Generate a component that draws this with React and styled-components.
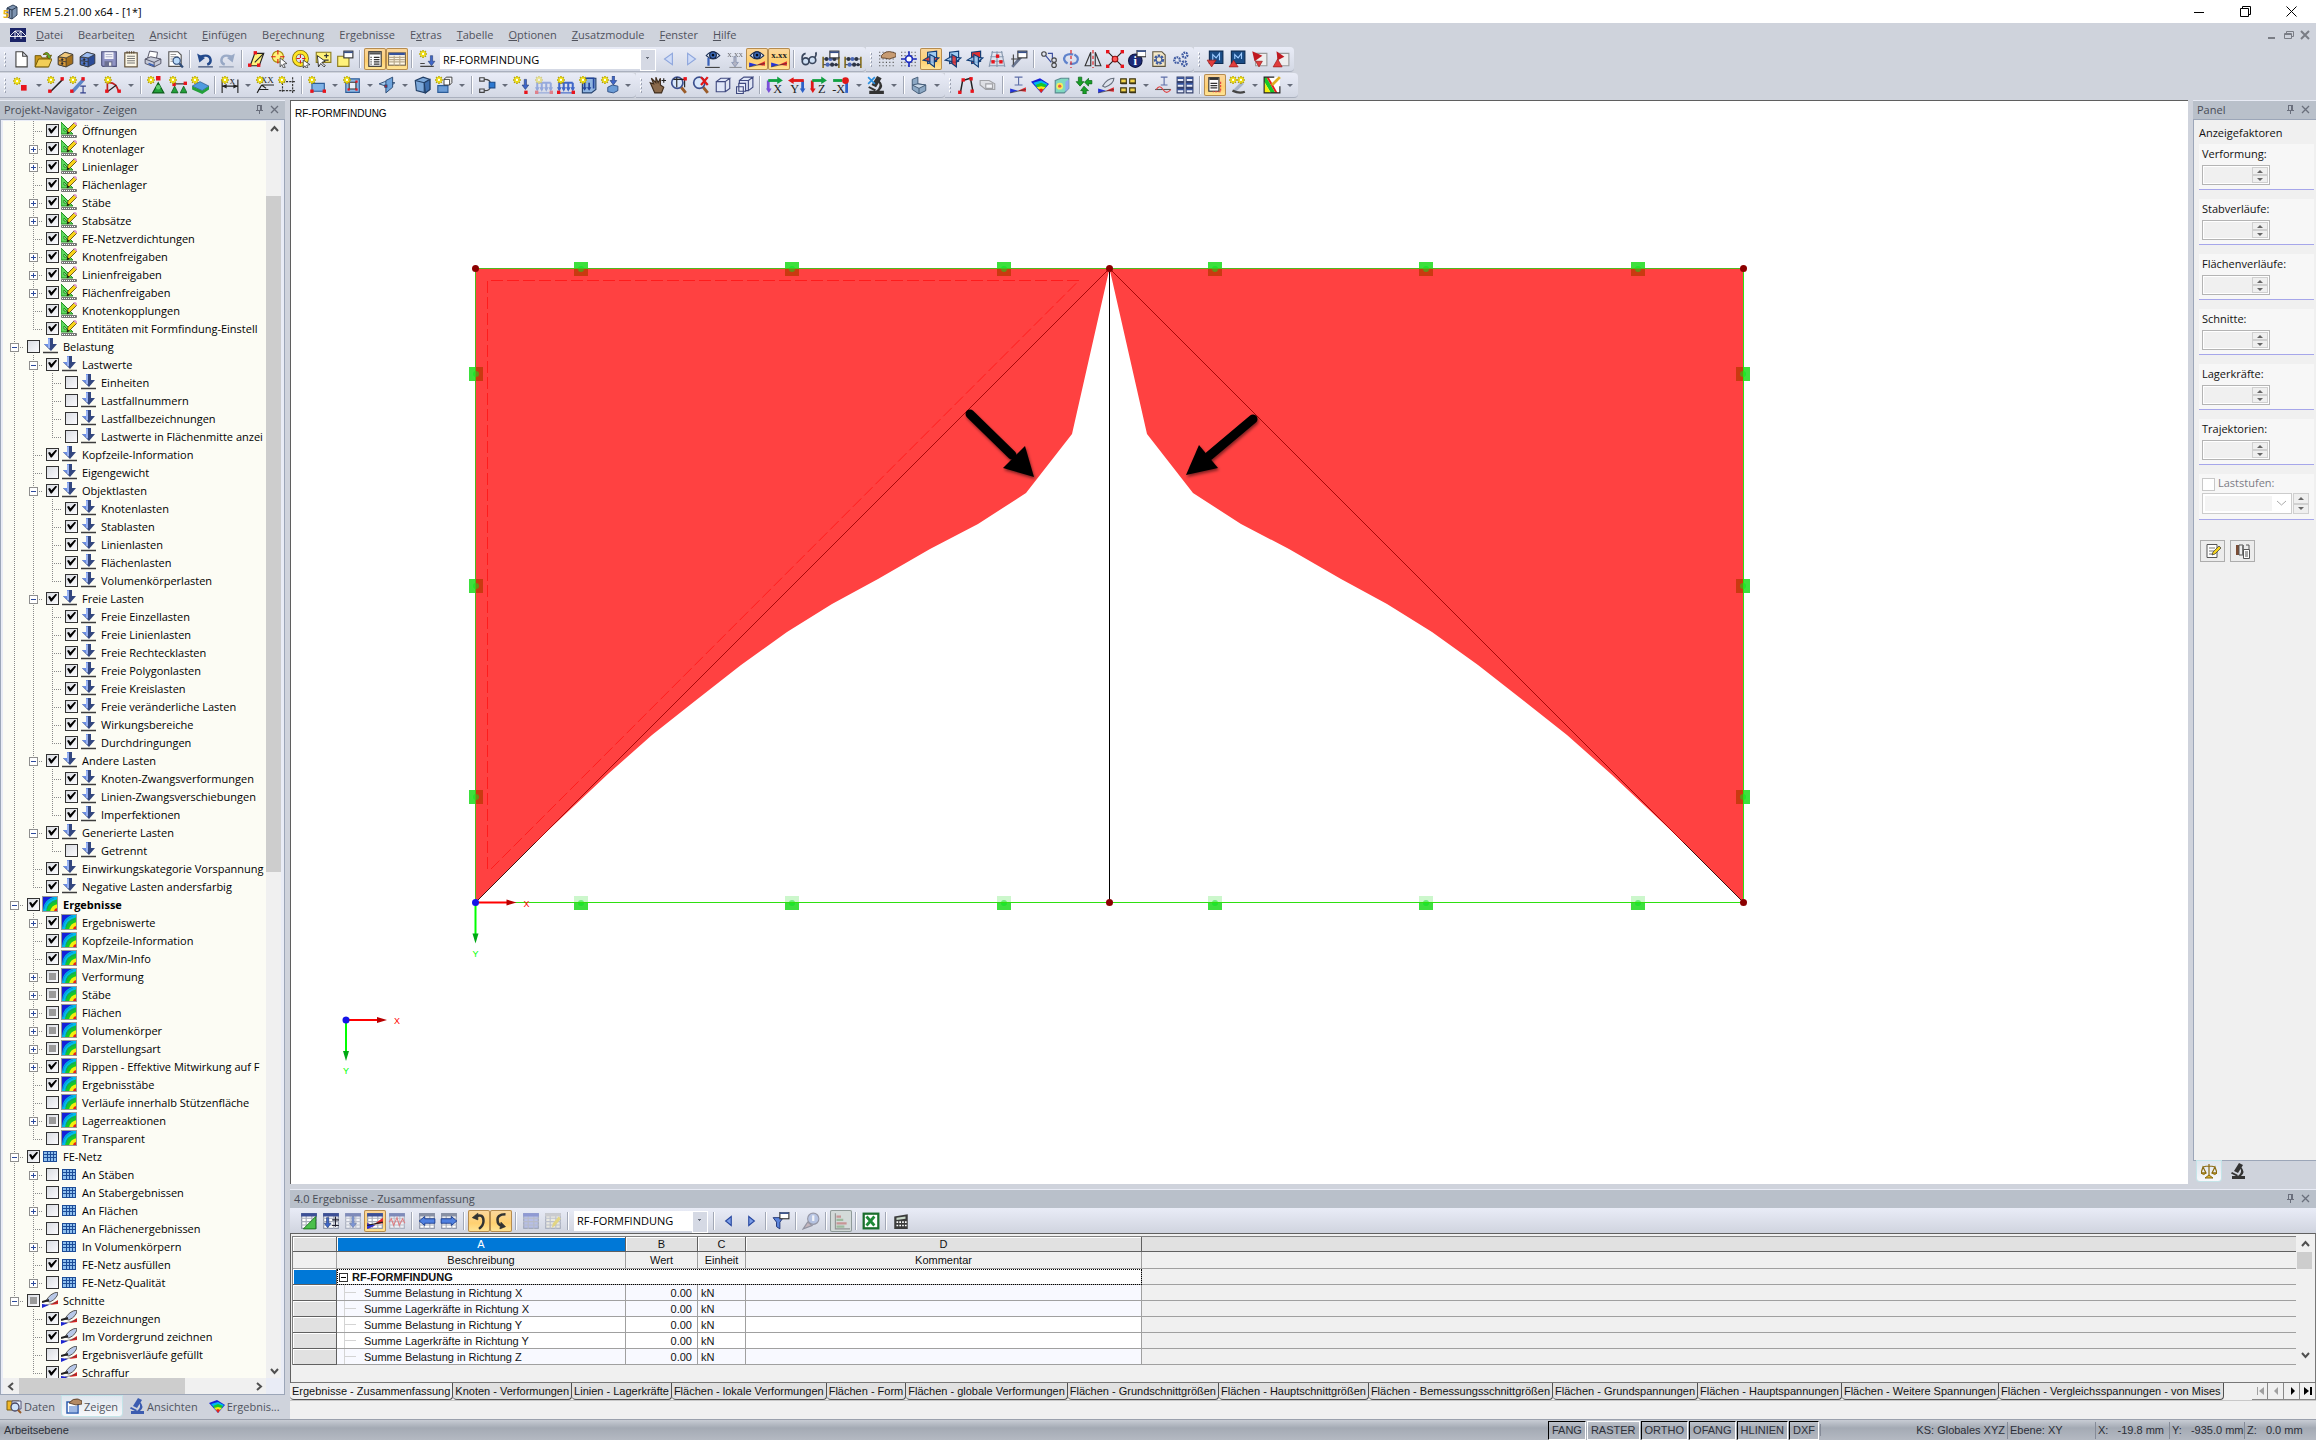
import React from "react";
import styled, { createGlobalStyle, css } from "styled-components";

const ui = `"Open Sans", "Noto Sans", sans-serif`;
const arial = `"Liberation Sans", Arial, sans-serif`;

const GlobalStyle = createGlobalStyle`
  * {
    box-sizing: border-box;
  }

  body {
    margin: 0;
    background: #cfd3dc;
    font-family: ${ui};
    font-size: 11px;
    color: #111;
    overflow: hidden;
  }

  button,
  input,
  select {
    font: inherit;
    color: inherit;
    margin: 0;
    padding: 0;
    border: 0;
    border-radius: 0;
    background: none;
  }

  svg {
    display: block;
  }
`;

/* ---------- icons ---------- */

const Star = ({ x = 0, y = 0 }) => (
  <g transform={`translate(${x} ${y})`}>
    <path d="M3.500 0v7M0 3.500h7M1 1l5 5M6 1L1 6" stroke="#a89600" strokeWidth="1.400" />
    <path d="M3.500 .5v6M.5 3.500h6M1.500 1.500l4 4M5.500 1.500l-4 4" stroke="#ffee10" strokeWidth="1" />
    <circle cx="3.500" cy="3.500" r="1" fill="#fff" />
  </g>
);

const Red = ({ x, y, s = 3 }) => (
  <rect x={x} y={y} width={s} height={s} fill="#e8141c" />
);

const Letter = ({ x = 8, y = 15, size = 11, fill = "#222", children }) => (
  <text
    x={x}
    y={y}
    fontSize={size}
    fill={fill}
    textAnchor="middle"
    fontFamily="Liberation Serif, serif"
  >
    {children}
  </text>
);

const Down = ({ x, y, h = 9, fill = "#3f66c8" }) => (
  <path
    d={`M${x - 1} ${y}h2v${h - 4}h2l-3 4-3-4h2z`}
    fill={fill}
    stroke="#20386f"
    strokeWidth=".5"
  />
);

const Dots = ({ fill = "#555" }) => (
  <path
    d="M1 2h15M1 5h15M1 8h15M1 11h15M1 14h15"
    stroke={fill}
    strokeWidth="1"
    strokeDasharray="1 2"
  />
);

const Box = ({ a, b, c }) => (
  <g stroke="#333" strokeWidth=".7">
    <path d="M2 6l6-4 7 2v8l-6 3-7-2z" fill={a} />
    <path d="M2 6l7 1v8l-7-2z" fill={b} />
    <path d="M2 6l6-4 7 2-6 3z" fill={c} />
    <path d="M2.500 9.500l6.500 1" fill="none" />
    <circle cx="5.500" cy="8.500" r=".8" fill="#222" />
    <circle cx="5.500" cy="12" r=".8" fill="#222" />
  </g>
);

const Eye = ({ x = 0, y = 0 }) => (
  <g transform={`translate(${x} ${y})`}>
    <path d="M1 5q6-7 12 0-6 6-12 0z" fill="#dfe8f6" stroke="#1c2f55" />
    <circle cx="7" cy="4.500" r="3" fill="#3c6ab8" stroke="#132244" />
    <circle cx="7" cy="4.500" r="1.200" fill="#050b18" />
  </g>
);

const Wedge = () => (
  <g>
    <path d="M1 15L1 11 8 13z" fill="#2434d8" />
    <path d="M15 10v4L8 13z" fill="#e0252a" />
    <path d="M1 15l14-3" stroke="#333" strokeWidth=".6" />
  </g>
);

const Planes = ({ a, b, c }) => (
  <g stroke="#0f3a74" strokeWidth="1">
    <path d="M5 2l8-1v9l-8 2z" fill={a} />
    <path d="M1 9l5-3 9 1-5 4z" fill={b} fillOpacity=".85" />
    <path d="M7 4l4 2v9l-4-3z" fill={c} fillOpacity=".85" />
  </g>
);

const Abacus = () => (
  <g fill="#2c3446">
    <path d="M1 6v10M15 6v10" stroke="#8a7322" strokeWidth="1.500" />
    <path d="M1 8h14M1 13h14" stroke="#555" />
    <circle cx="4" cy="8" r="1.800" />
    <circle cx="7.500" cy="8" r="1.800" fill="#4a68b8" />
    <circle cx="11" cy="8" r="1.800" />
    <circle cx="5" cy="13" r="1.800" fill="#4a68b8" />
    <circle cx="9" cy="13" r="1.800" />
    <circle cx="12.500" cy="13" r="1.500" />
  </g>
);

const Window = ({ x = 7, y = 1, fill = "#fff" }) => (
  <g>
    <rect x={x} y={y} width="8" height="6" fill={fill} stroke="#333" />
    <path d={`M${x} ${y + 1}h8`} stroke="#38518a" strokeWidth="1.500" />
  </g>
);

const View = ({ a, b, name }) => (
  <g>
    <path d="M2 4v8" stroke={a} strokeWidth="2.500" />
    <path d="M0 11h5l-2.500 4z" fill={a} />
    <path d="M2 4h9" stroke={b} strokeWidth="2.500" />
    <path d="M10 .5l5 3.500-5 3z" fill={b} />
    <Letter x={10.5}>{name}</Letter>
  </g>
);

const Loads = ({ fill }) => (
  <g>
    <path d="M2 6h12M2 6v6M6 6v6M10 6v6M14 6v6" stroke={fill} strokeWidth="1.800" fill="none" />
    <path d="M0 10h4l-2 4zM4 10h4l-2 4zM8 10h4l-2 4zM12 10h4l-2 4z" fill={fill} />
    <path d="M0 15h16" stroke={fill} />
  </g>
);

const SheetGrid = ({ fill = "#fff", head = "#3c4f96" }) => (
  <g>
    <rect x="1.500" y="1.500" width="13" height="13" fill={fill} stroke="#8890a4" />
    <path d="M1 5.500h14M1 8.500h14M1 11.500h14M5.500 2v13M10.500 2v13" stroke="#a8adba" />
    <rect x="1" y="1" width="14" height="3" fill={head} />
  </g>
);

const Cube = ({ x = 0, y = 0, fill = "none" }) => (
  <path
    d={`M${x + 1} ${y + 4}h8v9h-8zM${x + 1} ${y + 4}l4-3h8l-4 3M${x + 9} ${y + 13}l4-3v-9`}
    fill={fill}
    stroke="#404a80"
  />
);

const Lens = () => (
  <g>
    <path d="M10 10l4 5" stroke="#9a5b28" strokeWidth="2.500" />
    <circle cx="6.500" cy="6" r="5" fill="#d9e8fb" stroke="#3b4f8e" strokeWidth="1.500" />
  </g>
);

const Scope = ({ fill = "#333" }) => (
  <g fill={fill}>
    <path d="M9 0l4 2-5 8-4-2z" />
    <path d="M11 4q5 5 0 9H8q5-4 2-8zM2 13h13v3H2z" />
    <path d="M2 9l6 3-1 1.500-6-3z" />
  </g>
);

const rainbow = ["#1620d8", "#00b8f0", "#18c828", "#f4ee10", "#e8201c"];

const icons = {
  logo: (
    <g>
      <path d="M5 4l6-3 4 2v8l-5 4-5-2z" fill="#7d93b0" stroke="#34465e" />
      <path d="M5 4l5 2 5-3M10 6v9M7.500 5v8" fill="none" stroke="#2d3c52" />
      <text x="1" y="14" fontSize="11" fontWeight="bold" fill="#e8b416">5</text>
    </g>
  ),
  bridge: (
    <g>
      <rect width="16" height="14" y="1" fill="#1b2467" />
      <path d="M0 9.500h16M5 4v8M11 4v8M5 4L0 9M5 4l5 5M11 4L7 9M11 4l5 5M5 4h6" stroke="#fff" fill="none" strokeWidth=".9" />
    </g>
  ),
  Neu: <path d="M3.500 1.500h6l4 4v9.500h-10zM9.500 1.500v4h4" fill="#fff" stroke="#444" />,
  Öffnen: (
    <g stroke="#6b5200" strokeWidth=".8">
      <path d="M1 5h5l1 2h6v8H1z" fill="#c9971c" />
      <path d="M4 8h12l-3 7H1z" fill="#f2ce57" />
      <path d="M8 4q4-4 6 1l1.500-.5L14 8l-3-2 1.500-.5Q11 3 8 4z" fill="#58b42c" />
    </g>
  ),
  Block: <Box a="#a5701c" b="#d99a38" c="#f1c87c" />,
  Bibliothek: <Box a="#2c4c98" b="#4f76c8" c="#9cbcf0" />,
  Speichern: (
    <g>
      <path d="M1.500 1.500h13v13h-12l-1-1z" fill="#8f93c4" stroke="#50547e" />
      <rect x="4" y="2" width="8" height="6" fill="#f4f4fa" />
      <path d="M5 4h6M5 6h6" stroke="#b0b3cc" />
      <rect x="4" y="10" width="7" height="5" fill="#6c7090" />
      <rect x="8" y="11" width="2" height="3" fill="#eee" />
    </g>
  ),
  Protokoll: (
    <g>
      <rect x="2.500" y="2.500" width="11" height="12.500" fill="#fbf6e6" stroke="#5b4a30" />
      <path d="M4 2h8" stroke="#5b4a30" strokeWidth="2" strokeDasharray="1 1" />
      <path d="M4.500 5.500h7M4.500 7.500h7M4.500 9.500h7M4.500 11.500h7" stroke="#777" />
    </g>
  ),
  Drucken: (
    <g stroke="#4a4a5c" strokeWidth=".8">
      <path d="M5 1l7 1-1 6H3z" fill="#fff" />
      <path d="M1 8l5-2 9 2v4l-6 3-8-3z" fill="#c6cad8" />
      <path d="M1 8l8 3 6-3M9 11v4" fill="none" />
      <path d="M4 12l5 2" stroke="#3a62b8" strokeWidth="1.500" />
    </g>
  ),
  Vorschau: (
    <g>
      <path d="M2.500 1.500h8l3 3v10h-11z" fill="#fff" stroke="#555" />
      <path d="M4 4h5M4 6h7M4 8h4M4 10h3" stroke="#999" />
      <circle cx="9.500" cy="9.500" r="3.200" fill="#b9dafa" stroke="#2f4c78" />
      <path d="M12 12l3 3.500" stroke="#2f4c78" strokeWidth="2" />
    </g>
  ),
  Rückgängig: (
    <g>
      <path d="M2 15h13" stroke="#2a3f6a" />
      <path d="M4 6q8-3 9 3 0 3-3 4" fill="none" stroke="#22498c" strokeWidth="2.200" />
      <path d="M1 3l2 8 5-4z" fill="#22498c" />
    </g>
  ),
  Wiederholen: (
    <g opacity=".6">
      <path d="M1 15h13" stroke="#5f6f8c" />
      <path d="M12 6q-8-3-9 3 0 3 3 4" fill="none" stroke="#6b84ac" strokeWidth="2.200" />
      <path d="M15 3l-2 8-5-4z" fill="#6b84ac" />
    </g>
  ),
  Ebene: (
    <g>
      <path d="M2 14L6 3h8l-4 11z" fill="#fff27a" stroke="#222" />
      <path d="M14 3l-8 8" stroke="#222" />
      <Red x={0} y={12} />
      <Red x={5} y={1} />
      <Red x={8} y={12} />
    </g>
  ),
  Auswahl: (
    <g>
      <circle cx="7" cy="6" r="5" fill="#fff27a" stroke="#a88f10" />
      <path d="M7 0v4M7 8v4M1 6h4M9 6h4" stroke="#e01818" />
      <path d="M9 7l6 5-3 .5 1.500 3-1.500.5-1.500-3L9 15z" fill="#fff" stroke="#333" strokeWidth=".7" />
    </g>
  ),
  Ringauswahl: (
    <g>
      <circle cx="7.500" cy="7.500" r="5.500" fill="none" stroke="#7e6c0a" strokeWidth="4" />
      <circle cx="7.500" cy="7.500" r="5.500" fill="none" stroke="#ffe526" strokeWidth="2.600" />
      <path d="M7.500 4v3M7.500 9v3M4 7.500h3M9 7.500h3" stroke="#e01818" />
      <path d="M10 9l6 4-3 .5 1 2-1.500.5-1-2-1.500 2z" fill="#fff" stroke="#333" strokeWidth=".7" />
    </g>
  ),
  Objektauswahl: (
    <g>
      <path d="M2 2h13v9H2z" fill="#fff27a" stroke="#8c7c20" />
      <path d="M9 5h4M11 3v4M9 9h4" stroke="#333" />
      <path d="M3 5l1 10 2-3 3 3 1-1-3-3 3-1z" fill="#fff" stroke="#222" strokeWidth=".8" />
    </g>
  ),
  Fenster: (
    <g>
      <path d="M1.500 5.500h10v9h-10z" fill="#fff27a" stroke="#8c7c20" />
      <Window />
    </g>
  ),
  Navigator: (
    <g>
      <rect x="2.500" y="1.500" width="11" height="13" fill="#fff" stroke="#333" />
      <path d="M3 3h10" stroke="#555" strokeWidth="2" />
      <path d="M7 6.500h5M7 8.500h5M7 10.500h5M7 12.500h5" stroke="#333" />
      <path d="M4.500 6v8" stroke="#333" strokeDasharray="1 1" />
    </g>
  ),
  Tabelle: (
    <g>
      <rect x=".5" y="2.500" width="15" height="11" fill="#fff8e6" stroke="#7a6a50" />
      <path d="M1 3.500h14" stroke="#34519c" strokeWidth="2" />
      <path d="M1 6.500h14M1 8.500h14M1 10.500h14M5.500 5v9M10.500 5v9" stroke="#b8a88c" />
    </g>
  ),
  Lastfall: (
    <g>
      <Star x={1} />
      <Down x={12} y={5} />
      <path d="M2 12h4M2 14.500h12" stroke="#444" />
    </g>
  ),
  Zurück: <path d="M11 3v10L4 8z" fill="#cfdcf8" stroke="#8ea6dc" />,
  Vor: <path d="M5 3v10l7-5z" fill="#cfdcf8" stroke="#8ea6dc" />,
  "Lasten zeigen": (
    <g>
      <Eye x={1} />
      <path d="M4 7v7" stroke="#3a62b8" strokeWidth="2" />
      <path d="M1 15.500h13" stroke="#444" />
    </g>
  ),
  Lastwerte: (
    <g opacity=".6">
      <Letter y={6} size={8}>x.xx</Letter>
      <Down x={8} y={6} fill="#99a" />
      <path d="M3 15.500h11" stroke="#666" />
    </g>
  ),
  "Ergebnisse zeigen": (
    <g>
      <Wedge />
      <Eye x={1} />
    </g>
  ),
  Ergebniswerte: (
    <g>
      <Wedge />
      <text x="8" y="7" fontSize="8" fontWeight="bold" fill="#222" textAnchor="middle" fontFamily="Liberation Serif, serif">x.xx</text>
    </g>
  ),
  Brille: (
    <g fill="none" stroke="#39455c" strokeWidth="1.500">
      <circle cx="5" cy="10" r="3" fill="#cfe0f4" />
      <circle cx="11" cy="9" r="3" fill="#cfe0f4" />
      <path d="M2 9Q1 4 5 3M13 7q2-3 1-5" />
    </g>
  ),
  Berechnung: (
    <g>
      <Abacus />
      <Window />
    </g>
  ),
  "Alles berechnen": <Abacus />,
  Raster: (
    <g>
      <Dots />
      <path d="M3 5q4-5 10-3l3 1v3l-6 2q-4-1-7-1z" fill="#c79b72" stroke="#5f432b" strokeWidth=".8" />
    </g>
  ),
  Fang: (
    <g>
      <Dots />
      <circle cx="8" cy="8" r="3" fill="#fff" stroke="#2030c0" strokeWidth="1.500" />
      <path d="M8 1v4M8 11v4M1 8h4M11 8h4" stroke="#2030c0" strokeWidth="1.500" />
    </g>
  ),
  "Ebene XY": <Planes a="#9fcbf2" b="#e23030" c="#9fcbf2" />,
  "Ebene YZ": <Planes a="#9fcbf2" b="#9fcbf2" c="#e23030" />,
  "Ebene XZ": <Planes a="#e23030" b="#9fcbf2" c="#9fcbf2" />,
  Linienraster: (
    <g>
      <path d="M3 2h10M2 6h12M2 10h12M1 14h14M4 1L1 15M8 1v14M12 1l3 14" stroke="#8798ae" fill="none" />
      <Red x={7} y={4} />
      <Red x={3} y={9} />
      <Red x={10} y={9} />
    </g>
  ),
  Werkzeug: (
    <g>
      <path d="M2 15l8-9" stroke="#6a7690" strokeWidth="2.500" />
      <path d="M1 8h8M3 4v9" stroke="#444" />
      <Window />
    </g>
  ),
  Kopieren: (
    <g fill="none" stroke="#444">
      <circle cx="3.500" cy="3.500" r="2" />
      <circle cx="12.500" cy="9" r="2" />
      <circle cx="12.500" cy="13.500" r="2" />
      <path d="M5 5l5 6M7 3h4v4" stroke="#3a4d9e" />
    </g>
  ),
  Drehen: (
    <g fill="none">
      <path d="M5 12q-5-3-2-7 3-2 7-1M11 4q5 3 2 7-3 2-6 1" stroke="#5f83cc" strokeWidth="2" />
      <path d="M8 0v16" stroke="#e01818" strokeDasharray="3 2" />
    </g>
  ),
  Spiegeln: (
    <g fill="none" stroke="#333">
      <path d="M6 2v12H1zM10 2v12h5z" />
      <path d="M8 0v16" stroke="#e01818" strokeDasharray="3 2" />
    </g>
  ),
  Trennen: (
    <g>
      <path d="M1 1l14 14M15 1L1 15" stroke="#222" />
      <circle cx="8" cy="8" r="2.500" fill="#ff5a5a" stroke="#a01010" />
      <Red x={0} y={0} />
      <Red x={13} y={0} />
      <Red x={0} y={13} />
      <Red x={13} y={13} />
    </g>
  ),
  Info: (
    <g>
      <circle cx="6.500" cy="9.500" r="6" fill="#1c2b78" stroke="#0c1440" />
      <text x="6.500" y="13.500" fontSize="11" fontWeight="bold" fill="#fff" textAnchor="middle" fontFamily="Liberation Serif, serif">i</text>
      <Window x={8} y={0} />
    </g>
  ),
  Einstellungen: (
    <g>
      <path d="M2.500 1.500h8l3 3v10h-11z" fill="#f5e9c8" stroke="#5d5540" />
      <circle cx="8" cy="8.500" r="3.500" fill="none" stroke="#3c5aa0" strokeWidth="2.200" strokeDasharray="2 1" />
      <circle cx="8" cy="8.500" r="2.500" fill="#f5e9c8" stroke="#3c5aa0" />
    </g>
  ),
  Optionen: (
    <g fill="#e6ebf6" stroke="#3c58a0" strokeWidth="2">
      <circle cx="4.500" cy="9" r="2.500" strokeDasharray="1.500 .7" />
      <circle cx="11.500" cy="4.500" r="2.200" strokeDasharray="1.500 .7" />
      <circle cx="11" cy="12" r="2" strokeDasharray="1.500 .7" />
    </g>
  ),
  Import: (
    <g>
      <path d="M3 1h12v11H3z" fill="#1a4c86" stroke="#0d2c54" />
      <path d="M6 9V4l3 3 3-4v6" fill="none" stroke="#9ecbff" />
      <path d="M1 9h8l-4 6z" fill="#e03c3c" stroke="#981818" strokeWidth=".6" />
    </g>
  ),
  Export: (
    <g>
      <path d="M3 1h12v11H3z" fill="#1a4c86" stroke="#0d2c54" />
      <path d="M6 8V4l3 3 3-4v5" fill="none" stroke="#9ecbff" />
      <path d="M1 15h8L5 9z" fill="#e03c3c" stroke="#981818" strokeWidth=".6" />
    </g>
  ),
  "PDF-Import": (
    <g>
      <path d="M5 3h10v11H5z" fill="#eee" stroke="#999" />
      <path d="M2 1l9 4-7 5z" fill="#c01820" />
      <path d="M5 10h6l-3 5z" fill="#e03c3c" stroke="#981818" strokeWidth=".6" />
    </g>
  ),
  "PDF-Export": (
    <g>
      <path d="M5 3h10v11H5z" fill="#eee" stroke="#999" />
      <path d="M4 1l7 5-6 3z" fill="#c01820" />
      <path d="M1 15h8L5 8z" fill="#e03c3c" stroke="#981818" strokeWidth=".6" />
    </g>
  ),
  Knoten: (
    <g>
      <Star x={1} y={1} />
      <Red x={8} y={8} s={5} />
    </g>
  ),
  Linie: (
    <g>
      <path d="M3 14L14 3" stroke="#222" strokeWidth="1.300" />
      <Red x={1} y={12} />
      <Red x={12} y={1} />
      <Star />
    </g>
  ),
  Stab: (
    <g>
      <path d="M3 14L13 3" stroke="#5c86c8" strokeWidth="3" />
      <Red x={1} y={12} />
      <Red x={11} y={1} />
      <Star />
      <path d="M10 9h5M10 15h5M12.500 9v6" stroke="#33418c" />
    </g>
  ),
  Bogen: (
    <g>
      <path d="M3 14V6q8-1 10 8" fill="none" stroke="#c02020" strokeWidth="1.500" />
      <path d="M3 14l8-6" stroke="#222" />
      <Red x={1} y={12} />
      <Red x={12} y={12} />
      <Star />
    </g>
  ),
  Knotenlager: (
    <g>
      <path d="M10 6l5 9H5z" fill="#23a03a" stroke="#0c5a1a" />
      <circle cx="10" cy="10" r="2" fill="#5ed070" />
      <Red x={8} y={0} s={4} />
      <Star />
    </g>
  ),
  Linienlager: (
    <g>
      <path d="M4 7h10" stroke="#222" />
      <path d="M5 9l3 6H2zM13 9l3 6h-6z" fill="#23a03a" stroke="#0c5a1a" strokeWidth=".7" />
      <Red x={3} y={6} />
      <Red x={13} y={5} />
      <Star />
    </g>
  ),
  Flächenlager: (
    <g>
      <path d="M1 9l7-4 8 4-6 4z" fill="#4f9be0" stroke="#1c4c80" strokeWidth=".6" />
      <path d="M1 9l9 4 6-4v3l-6 4-9-4z" fill="#23a03a" />
      <Star />
    </g>
  ),
  Bemaßung: (
    <g>
      <path d="M1 3v12M15 3v12M1 9h14" stroke="#222" />
      <path d="M1 9l4-2v4zM15 9l-4-2v4z" fill="#222" />
      <Letter x={10} y={7} size={9}>x</Letter>
      <Star />
    </g>
  ),
  Kote: (
    <g>
      <Letter x={10} y={6} size={8}>XX</Letter>
      <path d="M5 8h11M5 8l-4 7M5 8l4 3M2 12h9" stroke="#222" fill="none" />
      <Star />
    </g>
  ),
  Hilfslinien: (
    <g>
      <path d="M4 3v12M13 1v14M1 5h14M1 13h14" stroke="#333" strokeDasharray="2 1" />
      <Star />
    </g>
  ),
  Fläche: (
    <g>
      <path d="M3.500 6.500h11v7h-11z" fill="#7fb2e6" stroke="#2c5c98" />
      <Red x={2} y={12} />
      <Red x={13} y={12} />
      <Star />
    </g>
  ),
  Öffnung: (
    <g>
      <path d="M2.500 2.500h12v12h-12z" fill="#8db8e4" stroke="#2c5c98" />
      <path d="M5.500 5.500h6v6h-6z" fill="#e8eefb" stroke="#333" />
      <Red x={4} y={4} s={2} />
      <Red x={11} y={4} s={2} />
      <Red x={4} y={11} s={2} />
      <Red x={11} y={11} s={2} />
      <Star />
    </g>
  ),
  Durchdringung: (
    <g stroke="#26456e" strokeWidth=".8">
      <path d="M1 7l5-2 9 1-5 4z" fill="#a7cdf0" />
      <path d="M7 4l6-3v9l-6 5z" fill="#6fa4dc" />
      <Red x={6} y={8} s={2} />
    </g>
  ),
  Volumen: (
    <g stroke="#223f66">
      <path d="M2 4l7-3 6 2v9l-4 3-8-2z" fill="#7ca8da" />
      <path d="M2 4l8 2 5-3M10 6v9" fill="none" />
      <path d="M10 6l5-3v9l-4 3z" fill="#3f6fae" />
    </g>
  ),
  Volumenmodell: (
    <g>
      <path d="M2.500 8.500h9v6h-9z" fill="#6b9cd6" stroke="#2c5c98" />
      <path d="M8 3h5v5H8zM8 3l2-2h5v5l-2 2" fill="#fff" stroke="#333" strokeWidth=".8" />
      <Star />
    </g>
  ),
  Gelenk: (
    <g fill="none" stroke="#444">
      <path d="M1.500 1.500h4v3h-4zM1.500 11.500h4v3h-4zM6 3q5 0 5 4M6 13q5 0 5-4" />
      <path d="M10 5.500h5v5h-5z" fill="#2c78d0" stroke="#1a4c8c" />
    </g>
  ),
  Knotenlast: (
    <g>
      <Down x={11} y={3} />
      <Red x={10} y={13} />
      <Star />
    </g>
  ),
  Stablast: (
    <g opacity=".45">
      <Loads fill="#3f66c8" />
      <Red x={0} y={13} />
      <Red x={13} y={13} />
      <Star />
    </g>
  ),
  Linienlast: (
    <g>
      <Loads fill="#3f66c8" />
      <Red x={0} y={13} />
      <Red x={13} y={13} />
      <Star />
    </g>
  ),
  Flächenlast: (
    <g>
      <path d="M3 5l4-3h8v10l-4 3H3z" fill="#8fb4e0" stroke="#24406c" />
      <path d="M5 2h8v4M5 6v5M9 6v5M13 6v5" stroke="#24469c" strokeWidth="1.500" fill="none" />
      <path d="M3 10h4l-2 3zM7 10h4l-2 3z" fill="#24469c" />
      <Star />
    </g>
  ),
  "Freie Last": (
    <g>
      <Down x={11} y={0} h={8} />
      <path d="M6 10l4-2 5 1v4l-4 2-5-1z" fill="#6b9cd6" stroke="#2c4c80" strokeWidth=".8" />
      <Star />
    </g>
  ),
  Verschieben: (
    <g>
      <path d="M2 6l3 1-2-5 4 4V1l2 5 2-4v6l3 2-2 5H6z" fill="#8a6a4c" stroke="#3e2c1c" />
      <path d="M12 4h4M14 2v4" stroke="#222" />
    </g>
  ),
  Zoomfenster: (
    <g>
      <Lens />
      <path d="M6 1v9M3 3h10v7" stroke="#222" fill="none" />
      <Red x={12} y={1} />
    </g>
  ),
  "Zoom zurück": (
    <g>
      <Lens />
      <path d="M8 1l6 7M14 1L8 8" stroke="#e01818" strokeWidth="2" />
    </g>
  ),
  Drahtmodell: <Cube x={1} y={1} fill="#dfe6f8" />,
  Ansichten3D: (
    <g>
      <Cube x={2} y={0} fill="#dfe6f8" />
      <path d="M2.500 6.500h6v7h-6zM.5 9.500h6v6h-6z" fill="#e8edfa" stroke="#404a80" />
    </g>
  ),
  "Ansicht X": <View a="#7b50d8" b="#10a040" name="X" />,
  "Ansicht Y": (
    <g>
      <path d="M13 4v8" stroke="#2c60c8" strokeWidth="2.500" />
      <path d="M10.500 11h5L13 15z" fill="#2c60c8" />
      <path d="M3 4h11" stroke="#e01818" strokeWidth="2.500" />
      <path d="M5 1L0 4l5 3z" fill="#e01818" />
      <Letter x={6}>Y</Letter>
    </g>
  ),
  "Ansicht Z": <View a="#e01818" b="#10a040" name="Z" />,
  "Ansicht -X": (
    <g>
      <path d="M13 5v10" stroke="#2c60c8" strokeWidth="2.500" />
      <path d="M1 4h8" stroke="#10a040" strokeWidth="2.500" />
      <circle cx="12" cy="4" r="3" fill="#e01818" />
      <Letter x={6}>-X</Letter>
    </g>
  ),
  Sichtbarkeit: (
    <g>
      <Scope />
      <path d="M1 1l6 6M7 1L1 7" stroke="#2c90e0" strokeWidth="1.500" />
    </g>
  ),
  Körper: (
    <g stroke="#3c5570" strokeWidth=".8">
      <path d="M2 3l5-2v6l7 1v5l-6 3-6-4z" fill="#8ca8c4" />
      <path d="M7 7l7 1-6 3-6-3zM8 11v5" fill="#c8d8e8" />
    </g>
  ),
  Rahmen: (
    <g>
      <path d="M3 15L5 4l7-2 2 11" fill="none" stroke="#222" strokeWidth="1.300" />
      <Red x={1} y={13} />
      <Red x={4} y={2} />
      <Red x={11} y={1} />
      <Red x={12} y={12} />
    </g>
  ),
  Etikett: (
    <g opacity=".6">
      <path d="M1 4h8l5 3v5H6L1 8z" fill="#ddd" stroke="#777" />
      <path d="M6 7h6v4H6z" fill="#fff" stroke="#777" />
    </g>
  ),
  Stabergebnis: (
    <g>
      <path d="M5 1h7M5 8h7M8.500 1v7" stroke="#5d6ea8" />
      <Wedge />
    </g>
  ),
  Flächenergebnis: (
    <g>
      <path d="M0 5l8-3 8 5-7 8z" fill={rainbow[0]} />
      <path d="M2 6l7-2 6 3-6 7z" fill={rainbow[1]} />
      <path d="M4 8l5-2 5 2-5 6z" fill={rainbow[2]} />
      <path d="M5 10l4-1 4 1-4 4z" fill={rainbow[3]} />
      <path d="M7 12l2-1 2 1-2 3z" fill={rainbow[4]} />
    </g>
  ),
  Volumenergebnis: (
    <g>
      <path d="M2 4l5-2h7v9l-4 4H2z" fill="#7fd8c0" stroke="#5a8a90" />
      <circle cx="6" cy="9" r="3" fill="#f4ee60" />
      <circle cx="6" cy="9" r="1.500" fill="#e86040" />
      <path d="M11 5l3-2v8l-3 3z" fill="#90a8f0" />
    </g>
  ),
  Lagerreaktion: (
    <g fill="#18a028" stroke="#0a6014" strokeWidth=".6">
      <path d="M3 1h3v4h2L4.500 9 1 5h2zM15 4v3h-3v2L8.500 5.500 12 2v2zM8 9l4 4h-2v3H7v-3H5z" />
    </g>
  ),
  Schnitt: (
    <g>
      <path d="M5 9Q9 2 15 2q0 5-8 8z" fill="#dfe4ee" stroke="#68707e" />
      <Wedge />
    </g>
  ),
  Kacheln: (
    <g fill="#f0d24c" stroke="#3c3414">
      <path d="M1.500 2.500h5v4h-5zM9.500 2.500h5v4h-5zM1.500 10.500h5v4h-5zM9.500 10.500h5v4h-5z" />
      <path d="M2 6.500h5M10 6.500h5M2 14.500h5M10 14.500h5" strokeWidth="1.500" />
    </g>
  ),
  Verlauf: (
    <g fill="none">
      <path d="M6 1h6M6 8h6M9 1v7" stroke="#5d6ea8" />
      <path d="M1 12h14" stroke="#555" />
      <path d="M2 12q3-5 6 0 3 5 7 0" stroke="#e04040" />
    </g>
  ),
  Ergebnistabelle: (
    <g>
      <path d="M1 1h6v4H1zM9 1h6v4H9zM1 6h6v4H1zM9 6h6v4H9zM1 11h6v4H1zM9 11h6v4H9z" fill="#e8ecf8" stroke="#34406c" />
      <path d="M1 2h6M9 2h6M1 7h6M9 7h6M1 12h6M9 12h6" stroke="#34519c" strokeWidth="1.500" />
    </g>
  ),
  Liste: (
    <g>
      <rect x="2.500" y="1.500" width="9" height="12" fill="#fff" stroke="#333" />
      <path d="M3 2.500h8" stroke="#333" strokeWidth="2" />
      <path d="M4 6.500h6M4 8.500h6M4 10.500h6" stroke="#333" />
      <path d="M13 5v9H6" stroke="#e04040" fill="none" strokeDasharray="2 1" />
    </g>
  ),
  Assistent: (
    <g>
      <path d="M6 13L13 6" stroke="#a8b4c8" strokeWidth="3" />
      <path d="M4 13q6 3 11 1" stroke="#444" strokeWidth="2" fill="none" />
      <Star x={1} />
      <Star x={8} />
    </g>
  ),
  Farbskala: (
    <g>
      <rect x="1" y="1" width="14" height="14" fill="#fff" />
      <path d="M1 1h2l8 14H7L1 5z" fill="#18c828" />
      <path d="M1 5l6 10H1z" fill="#f4ee10" />
      <path d="M3 1h2l8 14h-2z" fill="#e8201c" />
      <path d="M15 1L8 8" stroke="#e0b020" strokeWidth="2.500" />
      <path d="M10 1H1v14h14V9" fill="none" stroke="#222" />
    </g>
  ),
  "Tabelle bearbeiten": (
    <g>
      <SheetGrid />
      <path d="M3 15L14 4v11z" fill="#4cc04c" stroke="#187018" strokeWidth=".8" />
    </g>
  ),
  Sortieren: (
    <g>
      <SheetGrid />
      <Down x={5} y={5} />
      <path d="M9 7h6M12 4v9M9 12h6" stroke="#223" />
    </g>
  ),
  Lastspalten: (
    <g opacity=".6">
      <SheetGrid />
      <Down x={8} y={4} h={10} />
    </g>
  ),
  Ergebnisspalten: (
    <g>
      <SheetGrid />
      <path d="M1 15v-5l7 2zM15 5v5l-8 1z" fill="#e0252a" />
      <path d="M1 15v-5l7 2z" fill="#2434d8" />
      <path d="M1 12l14-3" stroke="#222" />
    </g>
  ),
  Diagrammspalten: (
    <g opacity=".6">
      <SheetGrid />
      <path d="M1 9l2-3 2 6 3-7 2 7 3-6 2 4" fill="none" stroke="#e04040" />
    </g>
  ),
  "Vorherige Tabelle": (
    <g>
      <SheetGrid head="#8890a4" />
      <path d="M1 8l5-4v2h9v4H6v2z" fill="#4f80e0" stroke="#1c3c8c" strokeWidth=".8" />
    </g>
  ),
  "Nächste Tabelle": (
    <g>
      <SheetGrid head="#8890a4" />
      <path d="M15 8l-5-4v2H1v4h9v2z" fill="#4f80e0" stroke="#1c3c8c" strokeWidth=".8" />
    </g>
  ),
  "Auswahl übernehmen": (
    <g fill="none" stroke="#333">
      <path d="M5 4q7-3 7 4 0 4-4 7" strokeWidth="2.200" />
      <path d="M2 5l5-4v6z" fill="#333" strokeWidth=".6" />
    </g>
  ),
  "Auswahl zeigen": (
    <g fill="none" stroke="#333">
      <path d="M12 2Q4 2 5 8q0 3 3 4" strokeWidth="2.200" />
      <path d="M12 13l-5 2 1-6z" fill="#333" strokeWidth=".6" />
    </g>
  ),
  Zeilenraster: (
    <g opacity=".7">
      <SheetGrid fill="#a8b2e4" head="#6c7ac8" />
    </g>
  ),
  Formel: (
    <g opacity=".6">
      <SheetGrid fill="#f4f0dc" head="#bbb" />
      <path d="M7 14l1-4 5-6 2 2-5 6z" fill="#e8d040" />
    </g>
  ),
  Links: <path d="M10 4v8L5 8z" fill="#7c9ee8" stroke="#2848a0" />,
  Rechts: <path d="M6 4v8l5-4z" fill="#7c9ee8" stroke="#2848a0" />,
  Filter: (
    <g>
      <path d="M1 5h9l-3 4v6l-3-2V9z" fill="#5c84dc" stroke="#1c3070" strokeWidth=".8" />
      <Window x={7} y={0} />
    </g>
  ),
  Hilfe: (
    <g opacity=".6">
      <circle cx="10" cy="6" r="5" fill="#9cb0dc" stroke="#667" />
      <path d="M10 3v5" stroke="#fff" strokeWidth="2" />
      <path d="M1 15l4-6 4 3z" fill="#b89ca0" stroke="#667" />
    </g>
  ),
  Balken: (
    <g opacity=".6">
      <path d="M3 1v14h13" stroke="#666" fill="none" />
      <path d="M4 4h4M4 10h9" stroke="#c06868" strokeWidth="2" />
      <path d="M4 7h6M4 13h7" stroke="#78a878" strokeWidth="2" />
    </g>
  ),
  Excel: (
    <g>
      <rect x="1.500" y="1.500" width="13" height="13" fill="#fff" stroke="#1a6e2c" strokeWidth="2" />
      <path d="M4 4l7 8M11 4l-7 8" stroke="#1f8a38" strokeWidth="2.500" />
    </g>
  ),
  Rechner: (
    <g>
      <path d="M2 4l12-2v13H2z" fill="#3c3c3c" />
      <path d="M4 5l8-1v2l-8 1z" fill="#c8d8c8" />
      <path d="M4 9h9M4 12h9" stroke="#fff" strokeWidth="1.500" strokeDasharray="1.500 1" />
    </g>
  ),
  modell: (
    <g>
      <path d="M0 0v12h12z" fill="#5fd85f" stroke="#1f8f1f" />
      <path d="M3 6v3h3z" fill="#fff" stroke="#1f8f1f" />
      <path d="M.5 13.500h15v2H.5z" fill="#fff" stroke="#777" />
      <path d="M2 14.500h13" stroke="#777" strokeWidth="2" strokeDasharray="1 1" />
      <path d="M6 12l1-5 6-6 3 2-7 7z" fill="#f8d418" stroke="#4c3c08" strokeWidth=".8" />
      <path d="M13 0l3 3" stroke="#e0a0d0" strokeWidth="2" />
      <path d="M6 12l.5-3 2 2z" fill="#111" />
    </g>
  ),
  last: (
    <g>
      <path d="M6 0h5v6h4l-6 7-7-7h4z" fill="#33477f" />
      <path d="M6 0h2v11L2 6h4z" fill="#6c8ee4" />
      <path d="M7 1v9" stroke="#c4d6ff" />
      <path d="M1 14.500h15" stroke="#3c3c3c" strokeWidth="1.500" />
    </g>
  ),
  ergebnis: (
    <g>
      <rect width="16" height="16" fill={rainbow[0]} />
      <path d="M1 16Q1 3 14 0h2v16z" fill={rainbow[1]} />
      <path d="M4 16Q4 6 16 3v13z" fill={rainbow[2]} />
      <path d="M8 16q1-7 8-8v8z" fill={rainbow[3]} />
      <path d="M12 16q0-4 4-4v4z" fill={rainbow[4]} />
      <path d="M2 13Q3 5 12 2M5 13q1-6 9-8" fill="none" stroke="#0a7ab0" strokeWidth=".6" />
      <rect x=".5" y=".5" width="15" height="15" fill="none" stroke="#999" />
    </g>
  ),
  netz: (
    <g>
      <rect x="1" y="3" width="14" height="11" fill="#1c4c98" />
      <path d="M2 4h3v2H2zM6 4h2v2H6zM9 4h2v2H9zM12 4h2v2h-2zM2 7h3v2H2zM6 7h2v2H6zM9 7h2v2H9zM12 7h2v2h-2zM2 10h3v3H2zM6 10h2v3H6zM9 10h2v3H9zM12 10h2v3h-2z" fill="#8fc0ee" />
    </g>
  ),
  schnitt: (
    <g>
      <path d="M4 9Q8 1 16 0q0 6-8 10z" fill="#b8c8e8" stroke="#555" />
      <path d="M0 10l7-2" stroke="#222" strokeWidth="2" />
      <path d="M0 12v4l7-3z" fill="#1c24d0" />
      <path d="M16 8v4l-8 1z" fill="#e02020" />
      <path d="M4 13l12-3" stroke="#444" strokeWidth=".6" />
    </g>
  ),
  Daten: (
    <g>
      <path d="M1 3h12v9H1z" fill="#f0b828" stroke="#7c5c10" />
      <path d="M6 3h9v8H6z" fill="#e8f0fc" stroke="#557" />
      <circle cx="9" cy="9" r="4" fill="#cfe2fa" stroke="#446" strokeWidth="1.300" />
      <path d="M12 12l3 3" stroke="#9a5b28" strokeWidth="2" />
    </g>
  ),
  Zeigen: (
    <g>
      <path d="M1 4h11v11H1z" fill="#fff" stroke="#2c5cb0" strokeWidth="1.500" />
      <path d="M3 9h8M3 11h8M3 13h8" stroke="#3c70c8" />
      <path d="M3 5q4-5 9-4l4 2v3l-6 1z" fill="#b48a64" stroke="#4c3420" strokeWidth=".8" />
    </g>
  ),
  Ansichten: <Scope fill="#3c5cb0" />,
  waage: (
    <g fill="none" stroke="#8a6a10">
      <path d="M8 1v12M2 4q6-2 12 0M2 4L0 10h5zM14 4l-3 6h5z" strokeWidth="1.200" />
      <path d="M0 10h5q-2 3-5 0zM11 10h5q-2 3-5 0zM4 15l4-3 4 3z" fill="#d8b030" />
    </g>
  ),
  mikroskop: <Scope />,
  "Werte bearbeiten": (
    <g>
      <path d="M2 1.500h10v13H2z" fill="#fff" stroke="#555" />
      <path d="M4 5h6M4 8h5M4 11h4" stroke="#777" />
      <path d="M7 12l1-3 6-6 2 2-6 6z" fill="#f4d21c" stroke="#333" strokeWidth=".7" />
    </g>
  ),
  "Werte kopieren": (
    <g>
      <path d="M1 2h3v10H1z" fill="#7c4c34" />
      <path d="M4 2h4v10H4z" fill="#eee" stroke="#555" />
      <path d="M7 2h2v10H7z" fill="#777" />
      <path d="M8.500 6.500h6v9h-6z" fill="#fff" stroke="#555" />
      <path d="M10 9h3M10 11h3M10 13h3M11 2h3v4" stroke="#555" fill="none" />
    </g>
  ),
};

const Icon = ({ name, size = 16 }) => (
  <svg width={size} height={size} viewBox="0 0 16 16" fill="none" aria-hidden="true">
    {icons[name]}
  </svg>
);

/* ---------- window frame ---------- */

const Shell = styled.div`
  height: 100vh;
  display: flex;
  flex-direction: column;
`;

const TitleBar = styled.header`
  height: 23px;
  flex: none;
  display: flex;
  align-items: center;
  gap: 5px;
  padding: 0 2px;
  background: #fff;
  color: #000;
`;

const WindowButtons = styled.div`
  margin-left: auto;
  display: flex;

  button {
    width: 46px;
    height: 20px;
    display: flex;
    align-items: center;
    justify-content: center;
  }
`;

const MenuBar = styled.nav`
  height: 24px;
  flex: none;
  display: flex;
  align-items: center;
  padding: 0 5px 1px 10px;
  color: #50525c;

  a {
    color: inherit;
    text-decoration: none;
    margin-left: 15px;
  }

  a:first-of-type {
    margin-left: 10px;
  }
`;

const MdiButtons = styled.div`
  margin-left: auto;
  display: flex;
  gap: 4px;
`;

const ToolRow = styled.div`
  height: 26px;
  flex: none;
  display: flex;
  align-items: flex-start;
`;

const ToolGroup = styled.div`
  height: 25px;
  display: flex;
  align-items: center;
  padding-right: 2px;
  background: linear-gradient(#e9ecf7, #d3d8e4);
  border-bottom: 1px solid #aab0be;
  border-radius: 0 4px 4px 0;
`;

const Grip = styled.i`
  width: 10px;
  height: 16px;
  background: radial-gradient(circle, #fff 0 1px, transparent 1px) 3px 0 / 3px 4px repeat-y,
    radial-gradient(circle, #9da3b2 0 1px, transparent 1px) 4px 1px / 3px 4px repeat-y;
`;

const Separator = styled.i`
  width: 8px;
  height: 18px;
  background: linear-gradient(90deg, transparent 3px, #a2a8b6 3px 4px, #fff 4px 5px, transparent 5px);
`;

const ToolButton = styled.button`
  width: 22px;
  height: 22px;
  display: flex;
  align-items: center;
  justify-content: center;

  ${(p) =>
    p.$active &&
    css`
      background: linear-gradient(#fbd7a0, #ffd070 60%, #ffe79a);
      box-shadow: inset 0 0 0 1px #b58c50;
      border-radius: 2px;
    `}

  ${(p) =>
    p.$held &&
    css`
      background: #d3dad9;
      box-shadow: inset 0 0 0 1px #8f9a99;
      border-radius: 2px;
    `}
`;

const ToolArrow = styled.button`
  width: 13px;
  height: 22px;
  display: flex;
  align-items: center;
  justify-content: center;

  &:after {
    content: "";
    border: 3px solid transparent;
    border-top-color: #666c7a;
    border-bottom: 0;
  }
`;

const Combo = styled.label`
  position: relative;
  display: flex;
  width: ${(p) => p.$width}px;
  height: 20px;
  margin: 0 2px;
  background: #fff;

  select {
    appearance: none;
    width: 100%;
    padding-left: 3px;
    color: #000;
  }

  &:after {
    content: "";
    position: absolute;
    right: 0;
    top: 0;
    width: 14px;
    height: 20px;
    pointer-events: none;
    border: 1px solid #fff;
    background: conic-gradient(from 315deg at 50% 60%, #666c7a 0 90deg, transparent 0) 4px 7px / 5px 3px
        no-repeat,
      #d5d9e4;
  }
`;

function Tools({ items }) {
  return items.map((item, i) => {
    if (item === "|") return <Separator key={i} />;
    if (typeof item !== "string") return <React.Fragment key={i}>{item}</React.Fragment>;
    const drop = item.endsWith("+");
    const name = item.replace(/^[!~]|\+$/g, "");
    return (
      <React.Fragment key={i}>
        <ToolButton $active={item[0] === "!"} $held={item[0] === "~"} aria-label={name}>
          <Icon name={name} size={18} />
        </ToolButton>
        {drop && <ToolArrow aria-label={`${name} Auswahl`} />}
      </React.Fragment>
    );
  });
}

const ModuleCombo = ({ width }) => (
  <Combo $width={width}>
    <select aria-label="Lastfall">
      <option>RF-FORMFINDUNG</option>
    </select>
  </Combo>
);

// "|" separator, "!" pressed, "~" held, "+" with drop-down
const toolbars = [
  [
    ["Neu", "Öffnen", "Block", "Bibliothek", "Speichern", "Protokoll", "Drucken", "Vorschau", "|", "Rückgängig", "Wiederholen", "|", "Ebene", "Auswahl", "Ringauswahl", "Objektauswahl", "Fenster", "|", "!Navigator", "!Tabelle", "|", "Lastfall", <ModuleCombo width={216} />, "Zurück", "Vor", "Lasten zeigen", "Lastwerte", "!Ergebnisse zeigen", "!Ergebniswerte", "|", "Brille", "Berechnung", "Alles berechnen"],
    ["Raster", "Fang", "!Ebene XY", "Ebene YZ", "Ebene XZ", "Linienraster", "Werkzeug", "|", "Kopieren", "Drehen", "Spiegeln", "Trennen", "Info", "Einstellungen", "Optionen"],
    ["Import", "Export", "PDF-Import", "PDF-Export"],
  ],
  [
    ["Knoten+", "Linie", "Stab+", "Bogen+", "|", "Knotenlager", "Linienlager", "Flächenlager", "|", "Bemaßung+", "Kote", "Hilfslinien", "|", "Fläche+", "Öffnung+", "Durchdringung+", "Volumen", "Volumenmodell+", "|", "Gelenk+", "Knotenlast", "Stablast", "Linienlast", "Flächenlast", "Freie Last+"],
    ["Verschieben", "Zoomfenster", "Zoom zurück", "Drahtmodell", "Ansichten3D", "|", "Ansicht X", "Ansicht Y", "Ansicht Z", "Ansicht -X+", "Sichtbarkeit+", "|", "Körper+"],
    ["Rahmen", "Etikett", "|", "Stabergebnis", "Flächenergebnis", "Volumenergebnis", "Lagerreaktion", "Schnitt", "Kacheln+", "Verlauf", "Ergebnistabelle", "|", "!Liste", "Assistent+", "Farbskala+"],
  ],
];

// label before, underlined key, label after
const menu = [
  ["", "D", "atei"],
  ["Bearbeite", "n", ""],
  ["", "A", "nsicht"],
  ["", "E", "infügen"],
  ["Be", "r", "echnung"],
  ["Er", "g", "ebnisse"],
  ["E", "x", "tras"],
  ["", "T", "abelle"],
  ["", "O", "ptionen"],
  ["", "Z", "usatzmodule"],
  ["", "F", "enster"],
  ["", "H", "ilfe"],
];

/* ---------- docked panels ---------- */

const Main = styled.div`
  flex: 1;
  min-height: 0;
  display: flex;
  gap: 5px;
  padding-top: 1px;
`;

const Side = styled.aside`
  width: 285px;
  flex: none;
  display: flex;
  flex-direction: column;
`;

const PanelTitle = styled.div`
  height: 19px;
  flex: none;
  display: flex;
  align-items: center;
  gap: 6px;
  padding: 0 6px 2px 4px;
  background: #b9c0ca;
  border-top: 1px solid #e8ebf5;
  color: #484c56;

  span {
    flex: 1;
  }
`;

const Frame = styled.div`
  flex: 1;
  min-height: 0;
  display: flex;
  flex-direction: column;
  background: #e9ecf6;
  border: 1px solid #9ca6b8;
  padding: 1px 3px 0 2px;
`;

const TreeWrap = styled.div`
  flex: 1;
  min-height: 0;
  display: flex;
`;

const Tree = styled.div`
  flex: 1;
  min-width: 0;
  overflow: hidden;
  background: #fcfcf4;
  padding-left: 2px;
`;

const dotsY = "repeating-linear-gradient(to bottom, #8a8a8a 0 1px, transparent 1px 2px)";
const dotsX = "repeating-linear-gradient(to right, #8a8a8a 0 1px, transparent 1px 2px)";

const Row = styled.div`
  height: 18px;
  display: flex;
  align-items: center;
  white-space: nowrap;
  font-weight: ${(p) => (p.$bold ? 700 : 400)};
  color: #000;

  label {
    margin-left: 5px;
  }

  svg {
    margin-left: 2px;
    flex: none;
  }
`;

const Guide = styled.i`
  width: 19px;
  height: 18px;
  flex: none;
  display: flex;
  align-items: flex-end;
  padding: 0 0 3px 5px;
  background: ${dotsY} 9px 0 / 1px ${(p) => p.$line}px no-repeat;
  ${(p) =>
    p.$own &&
    css`
      background: ${dotsY} 9px 0 / 1px ${p.$line}px no-repeat, ${dotsX} 9px 10px / 10px 1px no-repeat;
      margin-right: 3px;
    `}
`;

const Expander = styled.button`
  width: 9px;
  height: 9px;
  border: 1px solid #8e8e8e;
  background: linear-gradient(#2c4a9c, #2c4a9c) 1px 3px / 5px 1px no-repeat,
    linear-gradient(#2c4a9c, #2c4a9c) 3px 1px / 1px ${(p) => (p.$open ? 0 : 5)}px no-repeat, #fff;
`;

const Check = styled.input`
  appearance: none;
  width: 13px;
  height: 13px;
  flex: none;
  border: 1px solid #333;
  background: linear-gradient(135deg, #d9dce2, #fbfbfd);

  ${(p) =>
    p.$muted &&
    css`
      background: #fff;
      border-color: #c8c8c8;
    `}

  &:checked:after {
    content: "";
    display: block;
    width: 9px;
    height: 8px;
    margin: 1px;
    background: #000;
    clip-path: polygon(0 40%, 22% 30%, 38% 58%, 88% 0, 100% 15%, 42% 100%, 30% 100%);
  }

  ${(p) =>
    p.$partial &&
    css`
      &:after {
        content: "";
        display: block;
        width: 7px;
        height: 7px;
        margin: 2px;
        background: #9a9a9a;
      }
    `}
`;

const ScrollBar = styled.div`
  flex: none;
  width: ${(p) => (p.$horizontal ? "auto" : "15px")};
  height: ${(p) => (p.$horizontal ? "16px" : "auto")};
  margin-right: ${(p) => (p.$horizontal ? "15px" : 0)};
  display: flex;
  flex-direction: ${(p) => (p.$horizontal ? "row" : "column")};
  align-items: stretch;
  background: #f0f0f0;

  button {
    width: 16px;
    height: 16px;
    display: flex;
    align-items: center;
    justify-content: center;
    flex: none;
  }
`;

const Thumb = styled.div`
  flex: ${(p) => p.$size} 1 0;
  background: #cdcdcd;
`;

const Space = styled.div`
  flex: ${(p) => p.$size} 1 0;
`;

const chevrons = {
  up: "M1 6l3.500-4L8 6",
  down: "M1 3l3.500 4L8 3",
  left: "M6 1L2 4.500 6 8",
  right: "M3 1l4 3.500L3 8",
};

const Chevron = ({ to }) => (
  <button aria-label={to}>
    <svg width="9" height="9" fill="none" stroke="#505050" strokeWidth="2">
      <path d={chevrons[to]} />
    </svg>
  </button>
);

const Pin = () => (
  <svg width="9" height="10" fill="none" stroke="#6a6f7c">
    <path d="M2.500 1v5M6.500 1v5M2 1.500h5M1 6.500h7M5.500 1v5M4.500 7v3" />
  </svg>
);

const Cross = () => (
  <svg width="9" height="9" fill="none" stroke="#6a6f7c" strokeWidth="1.300">
    <path d="M1 1l7 7M8 1L1 8" />
  </svg>
);

const SideTabs = styled.div`
  height: 24px;
  flex: none;
  display: flex;
  align-items: flex-start;
  padding: 1px 0 0 2px;
  color: #50545e;
`;

const SideTab = styled.button`
  height: 20px;
  display: flex;
  align-items: center;
  gap: 2px;
  padding: 0 4px;
  margin-right: 3px;
  white-space: nowrap;

  ${(p) =>
    p.$active &&
    css`
      background: linear-gradient(#dfe6ee, #f7f8fb);
      box-shadow: 0 0 0 1px #c4e4e8;
      border-radius: 0 0 3px 3px;
    `}
`;

// level, state (1 checked, 0 empty, 2 partial), expander, icon, label
const tree = [
  [1, 1, "", "modell", "Öffnungen"],
  [1, 1, "+", "modell", "Knotenlager"],
  [1, 1, "+", "modell", "Linienlager"],
  [1, 1, "", "modell", "Flächenlager"],
  [1, 1, "+", "modell", "Stäbe"],
  [1, 1, "+", "modell", "Stabsätze"],
  [1, 1, "", "modell", "FE-Netzverdichtungen"],
  [1, 1, "+", "modell", "Knotenfreigaben"],
  [1, 1, "+", "modell", "Linienfreigaben"],
  [1, 1, "+", "modell", "Flächenfreigaben"],
  [1, 1, "", "modell", "Knotenkopplungen"],
  [1, 1, "", "modell", "Entitäten mit Formfindung-Einstell"],
  [0, 0, "-", "last", "Belastung"],
  [1, 1, "-", "last", "Lastwerte"],
  [2, 0, "", "last", "Einheiten"],
  [2, 0, "", "last", "Lastfallnummern"],
  [2, 0, "", "last", "Lastfallbezeichnungen"],
  [2, 0, "", "last", "Lastwerte in Flächenmitte anzei"],
  [1, 1, "", "last", "Kopfzeile-Information"],
  [1, 0, "", "last", "Eigengewicht"],
  [1, 1, "-", "last", "Objektlasten"],
  [2, 1, "", "last", "Knotenlasten"],
  [2, 1, "", "last", "Stablasten"],
  [2, 1, "", "last", "Linienlasten"],
  [2, 1, "", "last", "Flächenlasten"],
  [2, 1, "", "last", "Volumenkörperlasten"],
  [1, 1, "-", "last", "Freie Lasten"],
  [2, 1, "", "last", "Freie Einzellasten"],
  [2, 1, "", "last", "Freie Linienlasten"],
  [2, 1, "", "last", "Freie Rechtecklasten"],
  [2, 1, "", "last", "Freie Polygonlasten"],
  [2, 1, "", "last", "Freie Kreislasten"],
  [2, 1, "", "last", "Freie veränderliche Lasten"],
  [2, 1, "", "last", "Wirkungsbereiche"],
  [2, 1, "", "last", "Durchdringungen"],
  [1, 1, "-", "last", "Andere Lasten"],
  [2, 1, "", "last", "Knoten-Zwangsverformungen"],
  [2, 1, "", "last", "Linien-Zwangsverschiebungen"],
  [2, 1, "", "last", "Imperfektionen"],
  [1, 1, "-", "last", "Generierte Lasten"],
  [2, 0, "", "last", "Getrennt"],
  [1, 1, "", "last", "Einwirkungskategorie Vorspannung"],
  [1, 1, "", "last", "Negative Lasten andersfarbig"],
  [0, 1, "-", "ergebnis", "Ergebnisse"],
  [1, 1, "+", "ergebnis", "Ergebniswerte"],
  [1, 1, "", "ergebnis", "Kopfzeile-Information"],
  [1, 1, "", "ergebnis", "Max/Min-Info"],
  [1, 2, "+", "ergebnis", "Verformung"],
  [1, 2, "+", "ergebnis", "Stäbe"],
  [1, 2, "+", "ergebnis", "Flächen"],
  [1, 2, "+", "ergebnis", "Volumenkörper"],
  [1, 2, "+", "ergebnis", "Darstellungsart"],
  [1, 1, "+", "ergebnis", "Rippen - Effektive Mitwirkung auf F"],
  [1, 1, "", "ergebnis", "Ergebnisstäbe"],
  [1, 0, "", "ergebnis", "Verläufe innerhalb Stützenfläche"],
  [1, 2, "+", "ergebnis", "Lagerreaktionen"],
  [1, 0, "", "ergebnis", "Transparent"],
  [0, 1, "-", "netz", "FE-Netz"],
  [1, 0, "+", "netz", "An Stäben"],
  [1, 0, "", "netz", "An Stabergebnissen"],
  [1, 0, "+", "netz", "An Flächen"],
  [1, 0, "", "netz", "An Flächenergebnissen"],
  [1, 0, "+", "netz", "In Volumenkörpern"],
  [1, 1, "", "netz", "FE-Netz ausfüllen"],
  [1, 0, "+", "netz", "FE-Netz-Qualität"],
  [0, 2, "-", "schnitt", "Schnitte"],
  [1, 1, "", "schnitt", "Bezeichnungen"],
  [1, 1, "", "schnitt", "Im Vordergrund zeichnen"],
  [1, 0, "", "schnitt", "Ergebnisverläufe gefüllt"],
  [1, 1, "", "schnitt", "Schraffur"],
];

// true while another node of this level follows under the same parent
const continues = (index, level) => {
  for (let i = index + 1; i < tree.length; i++) {
    if (tree[i][0] < level) return false;
    if (tree[i][0] === level) return true;
  }
  return false;
};

function TreeRow({ index }) {
  const [level, state, expander, icon, label] = tree[index];
  const guides = [];
  for (let k = 0; k < level; k++) {
    guides.push(<Guide key={k} $line={continues(index, k) ? 18 : 0} />);
  }
  return (
    <Row $bold={label === "Ergebnisse"}>
      {guides}
      <Guide $own $line={continues(index, level) ? 18 : 10}>
        {expander && <Expander $open={expander === "-"} aria-label={`${label} umschalten`} />}
      </Guide>
      <Check id={`node-${index}`} type="checkbox" defaultChecked={state === 1} $partial={state === 2} />
      <Icon name={icon} />
      <label htmlFor={`node-${index}`}>{label}</label>
    </Row>
  );
}

const Navigator = () => (
  <Side>
    <PanelTitle>
      <span>Projekt-Navigator - Zeigen</span>
      <Pin />
      <Cross />
    </PanelTitle>
    <Frame>
      <TreeWrap>
        <Tree>
          {tree.map((node, i) => (
            <TreeRow key={i} index={i} />
          ))}
        </Tree>
        <ScrollBar>
          <Chevron to="up" />
          <Space $size={59} />
          <Thumb $size={675} />
          <Space $size={489} />
          <Chevron to="down" />
        </ScrollBar>
      </TreeWrap>
      <ScrollBar $horizontal>
        <Chevron to="left" />
        <Thumb $size={165} />
        <Space $size={65} />
        <Chevron to="right" />
      </ScrollBar>
    </Frame>
    <SideTabs>
      <SideTab><Icon name="Daten" />Daten</SideTab>
      <SideTab $active><Icon name="Zeigen" />Zeigen</SideTab>
      <SideTab><Icon name="Ansichten" />Ansichten</SideTab>
      <SideTab><Icon name="Flächenergebnis" />Ergebnis...</SideTab>
    </SideTabs>
  </Side>
);

/* ---------- model view ---------- */

const Work = styled.div`
  flex: 1;
  min-width: 0;
  display: flex;
  flex-direction: column;
  gap: 5px;
`;

const Upper = styled.div`
  flex: 1;
  min-height: 0;
  display: flex;
  gap: 5px;
`;

const Viewport = styled.main`
  position: relative;
  flex: 1;
  min-width: 0;
  background: #fff;
  border: 1px solid #5f5f5f;
  border-width: 1px 0 0 1px;
  overflow: hidden;

  h1 {
    position: absolute;
    left: 4px;
    top: 7px;
    margin: 0;
    font: 10px/12px ${arial};
    color: #000;
  }
`;

const curve = [
  [475.5, 902.5], [541, 837], [608, 774], [652, 735], [695, 701], [741, 665], [787, 632],
  [832, 604], [878, 579], [930, 549], [978, 524], [1026, 493], [1072, 434], [1109.5, 268.5],
];
const leftSheet = `M475.5 268.5L${curve.map((p) => p.join(" ")).join("L")}Z`;
const supportX = [581, 792, 1004, 1215, 1426, 1638];
const supportY = [374, 586, 797];

const Support = ({ x, y, inner }) => (
  <g>
    <rect x={x - 7} y={y - 7} width="14" height="14" fill="#3de03d" />
    {inner === "top" && <rect x={x - 7} y={y} width="14" height="7" fill="#c93a10" />}
    {inner === "left" && <rect x={x} y={y - 7} width="7" height="14" fill="#c93a10" />}
    {inner === "right" && <rect x={x - 7} y={y - 7} width="7" height="14" fill="#c93a10" />}
    {inner === "bottom" && <rect x={x - 7} y={y - 7} width="14" height="7" fill="#ccf7cc" />}
    <circle cx={x} cy={y} r="3" fill="#00e81c" opacity=".5" />
  </g>
);

const Axes = ({ x, y }) => (
  <g>
    <path d={`M${x} ${y}h34`} stroke="#f00" strokeWidth="2" />
    <path d={`M${x + 31} ${y - 3}l10 3-10 3z`} fill="#b80000" />
    <path d={`M${x} ${y}v34`} stroke="#0f0" strokeWidth="2" />
    <path d={`M${x - 3} ${y + 31}l3 10 3-10z`} fill="#00a814" />
    <circle cx={x} cy={y} r="3.500" fill="#1414e8" />
    <text x={x + 51} y={y + 4} fontSize="9" textAnchor="middle" fill="#f00" fontFamily="Liberation Sans">X</text>
    <text x={x} y={y + 54} fontSize="9" textAnchor="middle" fill="#0f0" fontFamily="Liberation Sans">Y</text>
  </g>
);

const Model = () => (
  <svg width="100%" height="100%" fill="none">
    <defs>
      <filter id="shadow" x="-20%" y="-20%" width="150%" height="150%">
        <feDropShadow dx="1" dy="2" stdDeviation="1.500" floodOpacity=".5" />
      </filter>
    </defs>
    <g transform="translate(-291 -101)">
      <path d={leftSheet} fill="#ff4141" />
      <path d={leftSheet} fill="#ff4141" transform="matrix(-1 0 0 1 2219 0)" />
      <path d="M487.500 869V280.500H1079L491 869" stroke="#ff1c1c" strokeDasharray="12 4" />
      <path d="M475.500 902.500l634-634 634 634" stroke="#a80808" />
      <path d="M475.500 902.500l60-60M1743.500 902.500l-60-60" stroke="#401010" />
      <path d="M475.500 902.500h1268" stroke="#0f0" />
      <path d="M1109.500 268.500v634" stroke="#000" />
      {supportX.map((x) => (
        <React.Fragment key={x}>
          <Support x={x} y={269} inner="top" />
          <Support x={x} y={903} inner="bottom" />
        </React.Fragment>
      ))}
      {supportY.map((y) => (
        <React.Fragment key={y}>
          <Support x={476} y={y} inner="left" />
          <Support x={1743} y={y} inner="right" />
        </React.Fragment>
      ))}
      <path d="M475.500 268.500v634M475.500 268.500h1268" stroke="#4fb81c" />
      <path d="M1743.500 268.500v634M475.500 902.500h1268" stroke="#2ee010" />
      {[[475.5, 268.5], [1109.5, 268.5], [1743.5, 268.5], [1109.5, 902.5], [1743.5, 902.5]].map(([x, y]) => (
        <circle key={`${x}-${y}`} cx={x} cy={y} r="3.500" fill="#8c0000" />
      ))}
      <g filter="url(#shadow)" fill="#000" stroke="#000">
        <path d="M970 414l42 41" strokeWidth="9" strokeLinecap="round" />
        <path d="M1034 477l-31-9 22-22z" stroke="none" />
        <path d="M1253 419l-44 37" strokeWidth="9" strokeLinecap="round" />
        <path d="M1186 475l13-30 19 23z" stroke="none" />
      </g>
      <Axes x={475.5} y={902.5} />
      <Axes x={346} y={1020} />
    </g>
  </svg>
);

/* ---------- factor panel ---------- */

const FactorPanel = styled.aside`
  width: 123px;
  flex: none;
  display: flex;
  flex-direction: column;
`;

const FactorBody = styled.form`
  flex: 1;
  padding: 4px 2px 0 5px;
  background: #f0f0f0;
  border: 1px solid #9ca6b8;
  border-right: 0;

  h2 {
    margin: 0;
    height: 20px;
    font-size: 11px;
    font-weight: 400;
    line-height: 18px;
  }
`;

const Factor = styled.div`
  height: 46px;
  margin-bottom: 9px;
  padding: 1px 3px 0;
  background: #f7f7f7;
  border-bottom: 1px solid #a6a6ea;

  label {
    display: block;
    height: 20px;
    line-height: 18px;
    color: ${(p) => (p.$disabled ? "#7c7c86" : "#111")};
  }
`;

const CheckLine = styled.div`
  display: flex;
  align-items: center;
  gap: 3px;
  height: 18px;
`;

const Spinner = styled.div`
  display: flex;
  width: ${(p) => p.$width}px;
  height: 20px;
  border: 1px solid #b4b4b4;
  background: #fff;
  padding: 1px;

  input {
    appearance: none;
    flex: 1;
    min-width: 0;
    background: #f0f0f0;
  }
`;

const Spins = styled.div`
  width: 16px;
  flex: none;
  display: flex;
  flex-direction: column;

  button {
    flex: 1;
    display: flex;
    align-items: center;
    justify-content: center;
    background: #efefef;
    border: 1px solid #d0d0d0;
  }

  button:before {
    content: "";
    border: 3px solid transparent;
    border-top: 0;
    border-bottom-color: #666;
  }

  button + button:before {
    border-top: 3px solid #666;
    border-bottom: 0;
  }
`;

const StepLine = styled.div`
  display: flex;
  gap: 1px;
`;

const StepCombo = styled.div`
  display: flex;
  align-items: center;
  width: 90px;
  height: 21px;
  padding: 2px;
  background: #fff;
  border: 1px solid #ccc;

  select {
    appearance: none;
    flex: 1;
    height: 15px;
    background: #f0f0f0;
  }

  svg {
    margin: 0 3px 0 5px;
  }
`;

const SmallButtons = styled.div`
  display: flex;
  gap: 5px;
  padding: 11px 1px;

  button {
    width: 25px;
    height: 22px;
    display: flex;
    align-items: center;
    justify-content: center;
    background: #ececec;
    border: 1px solid #adadad;
  }
`;

const PanelTabs = styled.div`
  height: 23px;
  flex: none;
  display: flex;
  gap: 2px;
  padding: 0 4px;
`;

const factors = ["Verformung:", "Stabverläufe:", "Flächenverläufe:", "Schnitte:", "Lagerkräfte:", "Trajektorien:"];

const SpinButtons = () => (
  <Spins>
    <button type="button" aria-label="Erhöhen" />
    <button type="button" aria-label="Verringern" />
  </Spins>
);

const Factors = () => (
  <FactorPanel>
    <PanelTitle>
      <span>Panel</span>
      <Pin />
      <Cross />
    </PanelTitle>
    <FactorBody>
      <h2>Anzeigefaktoren</h2>
      {factors.map((name) => (
        <Factor key={name}>
          <label htmlFor={name}>{name}</label>
          <Spinner $width={68}>
            <input id={name} disabled />
            <SpinButtons />
          </Spinner>
        </Factor>
      ))}
      <Factor $disabled>
        <CheckLine>
          <Check $muted id="steps" type="checkbox" disabled />
          <label htmlFor="steps">Laststufen:</label>
        </CheckLine>
        <StepLine>
          <StepCombo>
            <select aria-label="Laststufe" disabled />
            <svg width="9" height="9" fill="none" stroke="#aaa">
              <path d="M0 2l4.500 4L9 2" />
            </svg>
          </StepCombo>
          <SpinButtons />
        </StepLine>
      </Factor>
      <SmallButtons>
        <button type="button" aria-label="Werte bearbeiten"><Icon name="Werte bearbeiten" /></button>
        <button type="button" aria-label="Werte kopieren"><Icon name="Werte kopieren" /></button>
      </SmallButtons>
    </FactorBody>
    <PanelTabs>
      <SideTab $active aria-label="Faktoren"><Icon name="waage" /></SideTab>
      <SideTab aria-label="Filter"><Icon name="mikroskop" /></SideTab>
    </PanelTabs>
  </FactorPanel>
);

/* ---------- result table ---------- */

const Results = styled.section`
  height: 230px;
  flex: none;
  display: flex;
  flex-direction: column;
  background: #f0f0f0;
`;

const ResultTools = styled.div`
  height: 25px;
  flex: none;
  display: flex;
  align-items: center;
  padding-left: 8px;
  background: linear-gradient(#e9ecf7, #d0d4df);
`;

const Sheet = styled.div`
  height: 150px;
  flex: none;
  display: flex;
  gap: 1px;
  padding: 2px 3px 20px 1px;
  border: 1px solid #606060;
  border-right: 1px solid #777;
  border-bottom-color: #777;
  font-family: ${arial};
`;

const Grid = styled.table`
  flex: 1;
  min-width: 0;
  height: 128px;
  table-layout: fixed;
  border-collapse: separate;
  border-spacing: 0;
  border-top: 1px solid #808080;
  border-left: 1px solid #808080;

  th,
  td {
    height: 16px;
    padding: 0 5px;
    line-height: 14px;
    font-weight: 400;
    text-align: left;
    white-space: nowrap;
    border-right: 1px solid #a0a0a0;
    border-bottom: 1px solid #a0a0a0;
    overflow: hidden;
  }

  th:last-child,
  td:last-child {
    background: #f0f0f0;
    border-right: 0;
  }
`;

const Letters = styled.tr`
  th {
    height: 15px;
    line-height: 13px;
    text-align: center;
    background: #e1e1e1;
    border-color: #606060;
    box-shadow: inset 1px 1px #fff;
  }

  th:last-child {
    background: #e1e1e1;
    box-shadow: none;
  }

  th[aria-selected="true"] {
    background: #0078d7;
    color: #fff;
  }
`;

const Heads = styled.tr`
  th {
    height: 17px;
    text-align: center;
    background: #f0f0f0;
  }
`;

const Stub = styled.th`
  && {
    background: ${(p) => (p.$selected ? "#0078d7" : "#e1e1e1")};
    border-color: #606060;
    box-shadow: inset 1px 1px #fff;
  }
`;

const DataRow = styled.tr`
  td {
    background: ${(p) => (p.$tint ? "#f8f9ff" : "#fff")};
  }

  td:nth-child(2) {
    padding-left: 27px;
    background: linear-gradient(#d4d4d4, #d4d4d4) 7px 0 / 1px 100% no-repeat,
      linear-gradient(#d4d4d4, #d4d4d4) 7px 7px / 12px 1px no-repeat, ${(p) => (p.$tint ? "#f8f9ff" : "#fff")};
  }

  td:nth-child(3) {
    text-align: right;
  }

  td:nth-child(4) {
    padding-left: 3px;
  }
`;

const GroupCell = styled.td`
  && {
    background: #fff;
    font-weight: 700;
    padding: 0 0 0 2px;
    outline: 1px dotted #000;
    outline-offset: -1px;
  }

  button {
    width: 9px;
    height: 9px;
    margin-right: 4px;
    border: 1px solid #333;
    background: linear-gradient(#000, #000) 1px 3px / 5px 1px no-repeat;
  }
`;

const SheetTabs = styled.div`
  height: 18px;
  flex: none;
  display: flex;
  align-items: stretch;
  font-family: ${arial};
  border-bottom: 1px solid #c8c8c8;
`;

const SheetTab = styled.button`
  padding: 0 2px;
  white-space: nowrap;
  background: ${(p) => (p.$active ? "#f0f0f0" : "#e1e1e1")};
  border-right: 1px solid #505050;
  border-bottom: 1px solid #505050;
  border-radius: 0 0 4px 4px;
`;

const Pager = styled.div`
  margin-left: auto;
  display: flex;

  button {
    width: 16px;
    border: 1px solid #888;
    border-width: 0 1px 1px 0;
    display: flex;
    align-items: center;
    justify-content: center;
    color: #000;
  }

  button:nth-child(-n + 2) {
    color: #a0a0a0;
  }
`;

const rows = [
  ["Summe Belastung in Richtung X", true],
  ["Summe Lagerkräfte in Richtung X", true],
  ["Summe Belastung in Richtung Y", false],
  ["Summe Lagerkräfte in Richtung Y", false],
  ["Summe Belastung in Richtung Z", true],
];

const sheetTabs = [
  "Ergebnisse - Zusammenfassung",
  "Knoten - Verformungen",
  "Linien - Lagerkräfte",
  "Flächen - lokale Verformungen",
  "Flächen - Form",
  "Flächen - globale Verformungen",
  "Flächen - Grundschnittgrößen",
  "Flächen - Hauptschnittgrößen",
  "Flächen - Bemessungsschnittgrößen",
  "Flächen - Grundspannungen",
  "Flächen - Hauptspannungen",
  "Flächen - Weitere Spannungen",
  "Flächen - Vergleichsspannungen - von Mises",
];

const resultTools = [
  "Tabelle bearbeiten", "Sortieren", "Lastspalten", "!Ergebnisspalten", "Diagrammspalten", "|",
  "Vorherige Tabelle", "Nächste Tabelle", "|", "!Auswahl übernehmen", "!Auswahl zeigen", "|",
  "Zeilenraster", "Formel", "|", <ModuleCombo width={134} />, "|", "Links", "Rechts", "|",
  "Filter", "|", "Hilfe", "|", "~Balken", "|", "Excel", "|", "Rechner",
];

const pagerIcons = ["M2 1h1v8H2zM9 1v8L4 5z", "M7 1v8L3 5z", "M4 1v8l4-4z", "M1 1v8l5-4zM7 1h2v8H7z"];

const ResultPanel = () => (
  <Results>
    <PanelTitle>
      <span>4.0 Ergebnisse - Zusammenfassung</span>
      <Pin />
      <Cross />
    </PanelTitle>
    <ResultTools>
      <Tools items={resultTools} />
    </ResultTools>
    <Sheet>
      <Grid>
        <colgroup>
          <col style={{ width: 44 }} />
          <col style={{ width: 289 }} />
          <col style={{ width: 72 }} />
          <col style={{ width: 48 }} />
          <col style={{ width: 396 }} />
          <col />
        </colgroup>
        <thead>
          <Letters>
            <th />
            <th aria-selected="true">A</th>
            <th>B</th>
            <th>C</th>
            <th>D</th>
            <th />
          </Letters>
          <Heads>
            <th />
            <th>Beschreibung</th>
            <th>Wert</th>
            <th>Einheit</th>
            <th>Kommentar</th>
            <th />
          </Heads>
        </thead>
        <tbody>
          <tr>
            <Stub $selected />
            <GroupCell colSpan={4}>
              <button aria-label="Gruppe zuklappen" />
              RF-FORMFINDUNG
            </GroupCell>
            <td />
          </tr>
          {rows.map(([name, tint]) => (
            <DataRow key={name} $tint={tint}>
              <Stub />
              <td>{name}</td>
              <td>0.00</td>
              <td>kN</td>
              <td />
              <td />
            </DataRow>
          ))}
        </tbody>
      </Grid>
      <ScrollBar>
        <Chevron to="up" />
        <Thumb $size={17} />
        <Space $size={78} />
        <Chevron to="down" />
      </ScrollBar>
    </Sheet>
    <SheetTabs>
      {sheetTabs.map((name, i) => (
        <SheetTab key={name} $active={i === 0}>{name}</SheetTab>
      ))}
      <Pager>
        {pagerIcons.map((d) => (
          <button key={d} aria-label="Blättern">
            <svg width="10" height="10" fill="currentColor"><path d={d} /></svg>
          </button>
        ))}
      </Pager>
    </SheetTabs>
  </Results>
);

/* ---------- status bar ---------- */

const StatusBar = styled.footer`
  height: 21px;
  flex: none;
  display: flex;
  align-items: center;
  padding: 0 0 0 4px;
  font-family: ${arial};
  color: #2c2f38;
  background: linear-gradient(#c8ccd4, #a4aab4 40%, #b4b9c2);
  border-top: 1px solid #9aa0ac;
`;

const Hint = styled.span`
  flex: 1;
`;

const Toggle = styled.button`
  height: 19px;
  padding: 0 3px;
  margin-right: 1px;
  border: 1px solid #fff;
  border-top-color: ${(p) => (p.$on ? "#000" : "#fff")};
  border-left-color: ${(p) => (p.$on ? "#000" : "#fff")};
`;

const Field = styled.span`
  width: ${(p) => p.$width}px;
  height: 17px;
  line-height: 17px;
  padding-left: 2px;
  border-left: 1px solid #858b98;
  white-space: pre;
`;

const Coordinates = styled.span`
  width: 187px;
  text-align: right;
  padding-right: 2px;
  border-left: 1px solid #858b98;
`;

const toggles = ["FANG", "RASTER", "ORTHO", "OFANG", "HLINIEN", "DXF"];

export default function App() {
  return (
    <Shell>
      <GlobalStyle />
      <TitleBar>
        <Icon name="logo" />
        <span>RFEM 5.21.00 x64 - [1*]</span>
        <WindowButtons>
          <button aria-label="Minimieren">
            <svg width="10" height="10" stroke="#000"><path d="M0 5.500h10" /></svg>
          </button>
          <button aria-label="Wiederherstellen">
            <svg width="11" height="11" stroke="#000" fill="none"><path d="M.5 2.500h8v8h-8zM2.500 2.500v-2h8v8h-2" /></svg>
          </button>
          <button aria-label="Schließen">
            <svg width="11" height="11" stroke="#000"><path d="M.5.5l10 10M10.500.5l-10 10" /></svg>
          </button>
        </WindowButtons>
      </TitleBar>
      <MenuBar>
        <Icon name="bridge" />
        {menu.map(([before, key, after]) => (
          <a key={before + key} href="#menu">{before}<u>{key}</u>{after}</a>
        ))}
        <MdiButtons>
          <svg width="12" height="12" stroke="#7a7d85" strokeWidth="2"><path d="M1 9h7" /></svg>
          <svg width="12" height="12" stroke="#7a7d85" fill="none"><path d="M1.500 4.500h7v5h-7zM1 5.500h7M3.500 4v-1.500h7v5h-2" /></svg>
          <svg width="12" height="12" stroke="#7a7d85" strokeWidth="2"><path d="M2 2l8 8M10 2l-8 8" /></svg>
        </MdiButtons>
      </MenuBar>
      {toolbars.map((groups, i) => (
        <ToolRow key={i}>
          {groups.map((items, j) => (
            <ToolGroup key={j}>
              <Grip />
              <Tools items={items} />
            </ToolGroup>
          ))}
        </ToolRow>
      ))}
      <Main>
        <Navigator />
        <Work>
          <Upper>
            <Viewport>
              <Model />
              <h1>RF-FORMFINDUNG</h1>
            </Viewport>
            <Factors />
          </Upper>
          <ResultPanel />
        </Work>
      </Main>
      <StatusBar>
        <Hint>Arbeitsebene</Hint>
        {toggles.map((name) => (
          <Toggle key={name} $on={name !== "RASTER"}>{name}</Toggle>
        ))}
        <Coordinates>KS: Globales XYZ</Coordinates>
        <Field $width={88}>Ebene: XY</Field>
        <Field $width={74}>X:   -19.8 mm</Field>
        <Field $width={75}>Y:   -935.0 mm</Field>
        <Field $width={72}>Z:   0.0 mm</Field>
      </StatusBar>
    </Shell>
  );
}
